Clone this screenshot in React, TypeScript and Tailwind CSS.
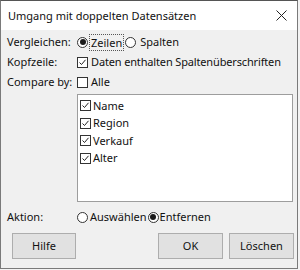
import React from "react";

const font = { fontFamily: '"Noto Sans", "Open Sans", sans-serif' };

function Check({ checked }: { checked?: boolean }) {
  return (
    <span className="inline-flex w-[11px] h-[11px] border border-[#333] bg-white items-center justify-center shrink-0">
      {checked && (
        <svg width="9" height="9" viewBox="0 0 9 9">
          <path d="M1.5 4.5 L3.5 6.5 L7.5 1.8" fill="none" stroke="#222" strokeWidth="1" />
        </svg>
      )}
    </span>
  );
}

function Radio({ checked }: { checked?: boolean }) {
  return (
    <span className="inline-flex w-[11px] h-[11px] rounded-full border border-[#333] bg-white items-center justify-center shrink-0">
      {checked && <span className="w-[6px] h-[6px] rounded-full bg-[#1a1a1a]" />}
    </span>
  );
}

function Btn({ children, w }: { children: React.ReactNode; w: string }) {
  return (
    <div className={`${w} h-[26px] border border-[#adadad] bg-[#e1e1e1] flex items-center justify-center text-[11px] text-[#111]`}>
      {children}
    </div>
  );
}

export default function App() {
  return (
    <div className="w-[300px] h-[270px] bg-[#f3f3f3] whitespace-nowrap" style={font}>
      <div className="w-[298px] h-[269px] border border-[#7a7a7a] border-t-[#555] bg-[#f0f0f0] flex flex-col text-[11px] text-[#111]">
        <div className="h-[29px] bg-white flex items-center justify-between pl-[7px] pr-[10px]">
          <span className="text-[11px] text-[#111] leading-none">Umgang mit doppelten Datensätzen</span>
          <svg width="11" height="11" viewBox="0 0 11 11">
            <path d="M0.5 0.5 L10.5 10.5 M10.5 0.5 L0.5 10.5" stroke="#222" strokeWidth="1" />
          </svg>
        </div>
        <div className="flex flex-col pl-[6px]">
          <div className="flex items-center h-[18px] mt-[3px]">
            <span className="w-[70px] shrink-0">Vergleichen:</span>
            <Radio checked />
            <span className="border border-dotted border-[#555] px-[1px] ml-[1px] leading-[15px]">Zeilen</span>
            <span className="ml-[1px] flex"><Radio /></span>
            <span className="ml-[4px]">Spalten</span>
          </div>
          <div className="flex items-center h-[20px] mt-[1px]">
            <span className="w-[70px] shrink-0">Kopfzeile:</span>
            <Check checked />
            <span className="ml-[3px] tracking-[-0.15px]">Daten enthalten Spaltenüberschriften</span>
          </div>
          <div className="flex items-center h-[20px]">
            <span className="w-[70px] shrink-0">Compare by:</span>
            <Check />
            <span className="ml-[3px]">Alle</span>
          </div>
          <div className="ml-[70px] mt-[2px] w-[216px] h-[108px] border border-[#9d9d9d] bg-white p-[1px] flex flex-col pt-[2px]">
            {["Name", "Region", "Verkauf", "Alter"].map((n) => (
              <div key={n} className="flex items-center h-[17.5px] pl-[1px]">
                <Check checked />
                <span className="ml-[2px]">{n}</span>
              </div>
            ))}
          </div>
          <div className="flex items-center h-[20px] mt-[5px]">
            <span className="w-[70px] shrink-0">Aktion:</span>
            <Radio />
            <span className="ml-[2px]">Auswählen</span>
            <span className="ml-[1px] flex"><Radio checked /></span>
            <span className="ml-[1px]">Entfernen</span>
          </div>
          <div className="flex items-center mt-[6px] pl-[5px] pr-[3px]">
            <Btn w="w-[64px]">Hilfe</Btn>
            <div className="flex-1" />
            <Btn w="w-[65px]">OK</Btn>
            <div className="w-[6px]" />
            <Btn w="w-[65px]">Löschen</Btn>
          </div>
        </div>
      </div>
    </div>
  );
}
